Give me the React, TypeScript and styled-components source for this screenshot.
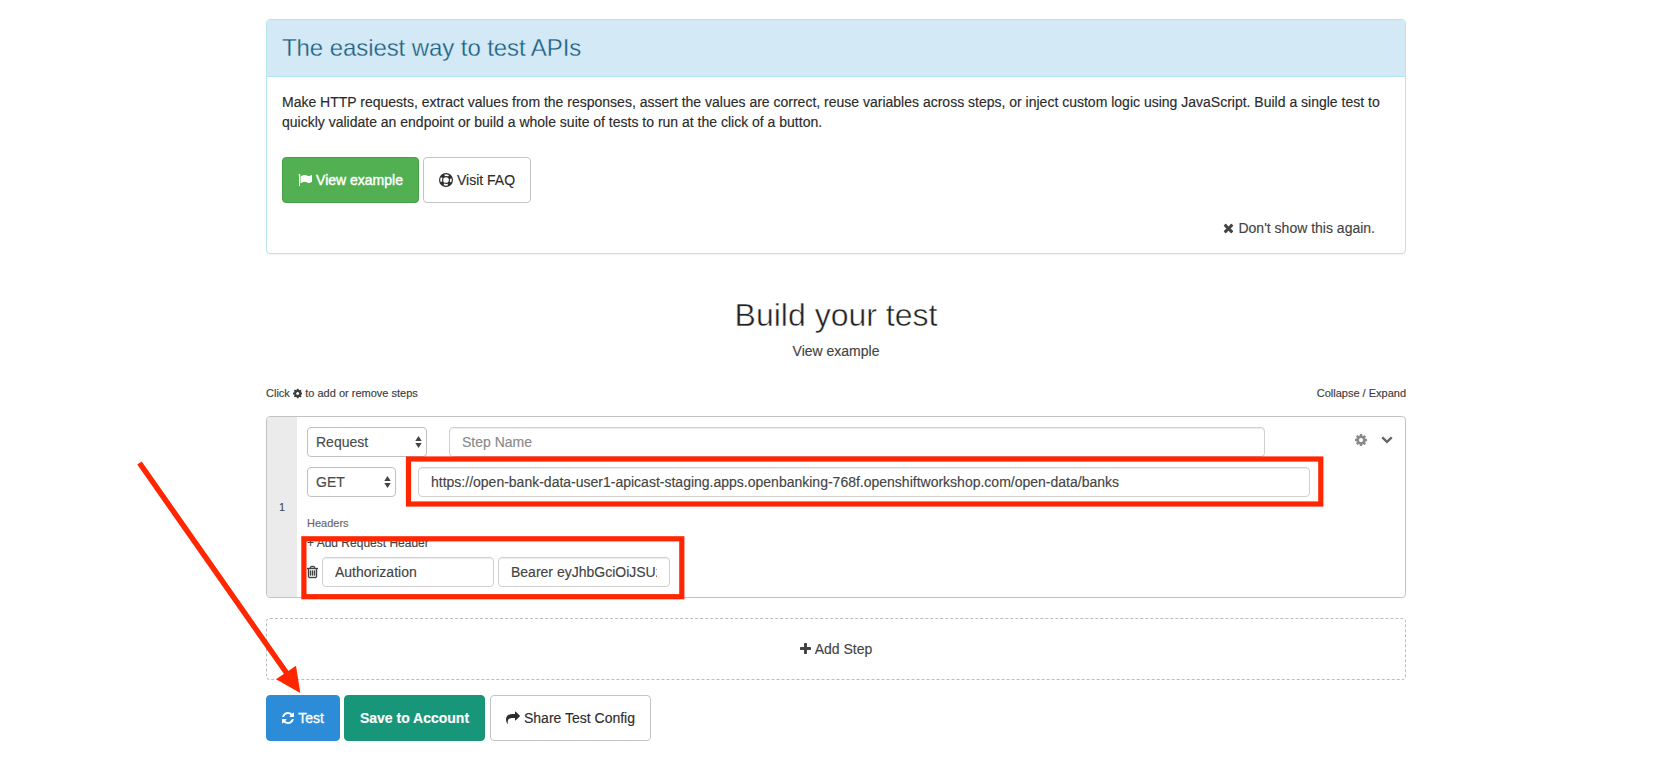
import React from "react";
import styled, { createGlobalStyle, css } from "styled-components";

const Global = createGlobalStyle`
  *, *::before, *::after { box-sizing: border-box; }
  body { margin: 0; background: #fff; -webkit-text-stroke: 0.15px currentColor; }
  body, input, button, select { font-family: "Liberation Sans", Arial, sans-serif; }
`;

const ICONS = {
  flag: "M320 256q0 72-64 110v1266q0 13-9.5 22.5t-22.5 9.5h-64q-13 0-22.5-9.5t-9.5-22.5v-1266q-64-38-64-110 0-53 37.5-90.5t90.5-37.5 90.5 37.5 37.5 90.5zm1472 64v763q0 25-12.5 38.5t-39.5 27.5q-215 116-369 116-61 0-123.5-22t-108.5-48-115.5-48-142.5-22q-192 0-464 146-17 9-33 9-26 0-45-19t-19-45v-742q0-32 31-55 21-14 79-43 236-120 421-120 107 0 200 29t219 88q38 19 88 19 54 0 117.5-21t110-47 88-47 54.5-21q26 0 45 19t19 45z",
  times: "M1490 1322q0 40-28 68l-136 136q-28 28-68 28t-68-28l-294-294-294 294q-28 28-68 28t-68-28l-136-136q-28-28-28-68t28-68l294-294-294-294q-28-28-28-68t28-68l136-136q28-28 68-28t68 28l294 294 294-294q28-28 68-28t68 28l136 136q28 28 28 68t-28 68l-294 294 294 294q28 28 28 68z",
  cog: "M1152 896q0-106-75-181t-181-75-181 75-75 181 75 181 181 75 181-75 75-181zm512-109v222q0 12-8 23t-20 13l-185 28q-19 54-39 91 35 50 107 138 10 12 10 25t-9 23q-27 37-99 108t-94 71q-12 0-26-9l-138-108q-44 23-91 38-16 136-29 186-7 28-36 28h-222q-14 0-24.5-8.5t-11.5-21.5l-28-184q-49-16-90-37l-141 107q-10 9-25 9-14 0-25-11-126-114-165-168-7-10-7-23 0-12 8-23 15-21 51-66.5t54-70.5q-27-50-41-99l-183-27q-13-2-21-12.5t-8-23.5v-222q0-12 8-23t19-13l186-28q14-46 39-92-40-57-107-138-10-12-10-24 0-10 9-23 26-36 98.5-107.5t94.5-71.5q13 0 26 10l138 107q44-23 91-38 16-136 29-186 7-28 36-28h222q14 0 24.5 8.5t11.5 21.5l28 184q49 16 90 37l142-107q9-9 24-9 13 0 25 10 129 119 165 170 7 8 7 22 0 12-8 23-15 21-51 66.5t-54 70.5q26 50 41 98l183 28q13 2 21 12.5t8 23.5z",
  chevron: "M1683 808l-742 741q-19 19-45 19t-45-19l-742-741q-19-19-19-45.5t19-45.5l166-165q19-19 45-19t45 19l531 531 531-531q19-19 45-19t45 19l166 165q19 19 19 45.5t-19 45.5z",
  trash: "M704 736v576q0 14-9 23t-23 9h-64q-14 0-23-9t-9-23v-576q0-14 9-23t23-9h64q14 0 23 9t9 23zm256 0v576q0 14-9 23t-23 9h-64q-14 0-23-9t-9-23v-576q0-14 9-23t23-9h64q14 0 23 9t9 23zm256 0v576q0 14-9 23t-23 9h-64q-14 0-23-9t-9-23v-576q0-14 9-23t23-9h64q14 0 23 9t9 23zm128 724v-948h-896v948q0 22 7 40.5t14.5 27 10.5 8.5h832q3 0 10.5-8.5t14.5-27 7-40.5zm-672-1076h448l-48-117q-7-9-17-11h-317q-10 2-17 11zm928 32v64q0 14-9 23t-23 9h-96v948q0 83-47 143.5t-113 60.5h-832q-66 0-113-58.5t-47-141.5v-952h-96q-14 0-23-9t-9-23v-64q0-14 9-23t23-9h309l70-167q15-37 54-63t79-26h320q40 0 79 26t54 63l70 167h309q14 0 23 9t9 23z",
  plus: "M1600 736v192q0 40-28 68t-68 28h-416v416q0 40-28 68t-68 28h-192q-40 0-68-28t-28-68v-416h-416q-40 0-68-28t-28-68v-192q0-40 28-68t68-28h416v-416q0-40 28-68t68-28h192q40 0 68 28t28 68v416h416q40 0 68 28t28 68z",
  refresh: "M1639 1056q0 5-1 7-64 268-268 434.5t-478 166.5q-146 0-282.5-55t-243.5-157l-129 129q-19 19-45 19t-45-19-19-45v-448q0-26 19-45t45-19h448q26 0 45 19t19 45-19 45l-137 137q71 66 161 102t187 36q134 0 250-65t186-179q11-17 53-117 8-23 30-23h192q13 0 22.5 9.5t9.5 22.5zm25-800v448q0 26-19 45t-45 19h-448q-26 0-45-19t-19-45 19-45l138-138q-148-137-349-137-134 0-250 65t-186 179q-11 17-53 117-8 23-30 23h-199q-13 0-22.5-9.5t-9.5-22.5v-7q65-268 270-434.5t480-166.5q146 0 284 55.5t245 156.5l130-129q19-19 45-19t45 19 19 45z",
  share: "M1792 640q0 26-19 45l-512 512q-19 19-45 19t-45-19-19-45v-256h-224q-98 0-175.5 6t-154 21.5-133 42.5-105.5 69.5-80 101-48.5 138.5-17.5 181q0 55 5 123 0 6 2.5 23.5t2.5 26.5q0 15-8.5 25t-23.5 10q-16 0-28-17-7-9-13-22t-13.5-30-10.5-24q-127-285-127-451 0-199 53-333 162-403 875-403h224v-256q0-26 19-45t45-19 45 19l512 512q19 19 19 45z",
};

type IconProps = { name: keyof typeof ICONS; size?: number; x?: number; w?: number; weight?: number };

/* Each glyph is trimmed to its advance: `x` is the left edge and `w` the width in 1792-unit em space. */
function Icon({ name, size = 14, x = 0, w = 1792, weight = 0 }: IconProps) {
  return (
    <svg
      width={(size * w) / 1792}
      height={size}
      viewBox={`${x} 0 ${w} 1792`}
      fill="currentColor"
      stroke={weight ? "currentColor" : "none"}
      strokeWidth={weight}
      aria-hidden
    >
      <path d={ICONS[name]} />
    </svg>
  );
}

function LifeRing() {
  return (
    <svg width="14" height="14" viewBox="0 0 14 14" fill="none" stroke="currentColor" aria-hidden>
      <circle cx="7" cy="7" r="6.4" strokeWidth="1.2" />
      <circle cx="7" cy="7" r="3.4" strokeWidth="1.1" />
      <circle cx="7" cy="7" r="5" strokeWidth="3" strokeDasharray="3.6 4.254" strokeDashoffset="-2.127" />
    </svg>
  );
}

const Page = styled.main`
  position: relative;
  width: 1673px;
  height: 777px;
  padding: 19px 267px 0 266px;
  overflow: hidden;
`;

const Panel = styled.section`
  height: 235px;
  border: 1px solid #b5e5ee;
  border-radius: 4px;
  box-shadow: 0 1px 1px rgba(0, 0, 0, 0.05);
`;

const PanelHeader = styled.header`
  height: 57px;
  padding: 0 15px;
  background: #d3e9f5;
  border-bottom: 1px solid #b5e5ee;
  border-radius: 3px 3px 0 0;
`;

const PanelTitle = styled.h3`
  margin: 0;
  font-size: 24px;
  font-weight: 400;
  line-height: 56px;
  letter-spacing: -0.08px;
  color: #225f81;
  -webkit-text-stroke: 0.3px #d3e9f5;
`;

const PanelBody = styled.div`
  padding: 15px;
`;

const Intro = styled.p`
  margin: 0 0 25px;
  font-size: 14px;
  line-height: 20px;
  color: #2b2b2b;
  white-space: nowrap;
`;

const ButtonRow = styled.div`
  display: flex;
  gap: 4px;
`;

const variants = {
  success: css`background: #52af52; border-color: #43a047; color: #fff; -webkit-text-stroke: 0.4px #fff;`,
  plain: css`background: #fff; border-color: #c4c4c4; color: #2d2d2d;`,
  primary: css`background: #2d8cd8; border-color: #2d8cd8; color: #fff; -webkit-text-stroke: 0.3px #fff;`,
  teal: css`background: #18967a; border-color: #18967a; color: #fff; font-weight: 700;`,
};

const Button = styled.button<{ $variant: keyof typeof variants; $width: number; $offset?: number }>`
  display: inline-flex;
  align-items: center;
  justify-content: center;
  gap: 4px;
  width: ${(p) => p.$width}px;
  height: 46px;
  margin-left: ${(p) => p.$offset ?? 0}px;
  padding: 0;
  border: 1px solid;
  border-radius: 4px;
  font-size: 14px;
  white-space: nowrap;
  ${(p) => variants[p.$variant]}
`;

const DismissRow = styled.div`
  display: flex;
  justify-content: flex-end;
  align-items: center;
  gap: 4px;
  margin: 15px 15px 0 0;
  font-size: 14px;
  line-height: 20px;
  color: #444;
`;

const Heading = styled.h1`
  margin: 39px 0 0;
  text-align: center;
  font-size: 32px;
  font-weight: 400;
  line-height: 44px;
  color: #222;
  -webkit-text-stroke: 0.5px #fff;
`;

const SubLink = styled.p`
  margin: 4px 0 0;
  text-align: center;
  font-size: 14px;
  line-height: 20px;
  color: #444;
`;

const HintBar = styled.div`
  display: flex;
  justify-content: space-between;
  margin-top: 24px;
  font-size: 11px;
  line-height: 16px;
  color: #3c3c3c;
`;

const Hint = styled.span`
  display: inline-flex;
  align-items: center;
  gap: 3px;
`;

const Step = styled.section`
  display: flex;
  height: 182px;
  margin-top: 15px;
  border: 1px solid #c2c2c2;
  border-radius: 4px;
`;

const StepNumber = styled.div`
  display: flex;
  align-items: center;
  justify-content: center;
  width: 30px;
  border-radius: 3px 0 0 3px;
  background: #ebebeb;
  font-size: 10px;
  color: #444;
`;

const StepBody = styled.div`
  flex: 1;
  padding: 10px 0 0 10px;
`;

const StepTools = styled.div`
  display: flex;
  gap: 14px;
  height: 40px;
  padding: 16px 12px 0 0;
  color: #8a8a8a;
  & > svg:last-child { color: #666; }
`;

const FieldRow = styled.div`
  display: flex;
  align-items: center;
  gap: 22px;
  height: 30px;
  & + & { margin-top: 10px; }
`;

const Select = styled.div<{ $width: number }>`
  display: flex;
  align-items: center;
  justify-content: space-between;
  width: ${(p) => p.$width}px;
  height: 30px;
  padding: 0 4px 0 8px;
  border: 1px solid #c0c0c0;
  border-radius: 4px;
  font-size: 14px;
  color: #4a4a4a;
`;

const Field = styled.input<{ $width: number }>`
  width: ${(p) => p.$width}px;
  height: 30px;
  padding: 0 12px;
  border: 1px solid #d0d0d0;
  border-radius: 4px;
  box-shadow: inset 0 1px 1px rgba(0, 0, 0, 0.075);
  background: #fff;
  font-size: 14px;
  color: #444;
  &::placeholder { color: #8a8a8a; opacity: 1; }
`;

const HeadersLabel = styled.div`
  margin-top: 18px;
  font-size: 11px;
  line-height: 16px;
  color: #666;
`;

const AddHeader = styled.div`
  margin: 4px 0 6px;
  font-size: 12px;
  line-height: 16px;
  color: #444;
`;

const HeaderRow = styled.div`
  display: flex;
  align-items: center;
  gap: 4px;
  color: #444;
`;

const AddStep = styled.div`
  display: flex;
  align-items: center;
  justify-content: center;
  gap: 4px;
  height: 62px;
  margin: 20px 0 15px;
  border: 1px dashed #bdbdbd;
  border-radius: 4px;
  font-size: 14px;
  color: #444;
`;

const Annotations = styled.svg`
  position: absolute;
  inset: 0;
  pointer-events: none;
`;

const SelectArrows = () => (
  <svg width="7" height="12" viewBox="0 0 7 12" fill="#444" aria-hidden>
    <path d="M0.3 5 L3.5 0 L6.7 5Z M0.3 7 L3.5 12 L6.7 7Z" />
  </svg>
);

export default function App() {
  return (
    <>
      <Global />
      <Page>
        <Panel>
          <PanelHeader><PanelTitle>The easiest way to test APIs</PanelTitle></PanelHeader>
          <PanelBody>
            <Intro>
              Make HTTP requests, extract values from the responses, assert the values are correct, reuse variables across steps, or inject custom logic using JavaScript. Build a single test to
              <br />
              quickly validate an endpoint or build a whole suite of tests to run at the click of a button.
            </Intro>
            <ButtonRow>
              <Button $variant="success" $width={137}><Icon name="flag" />View example</Button>
              <Button $variant="plain" $width={108}><LifeRing />Visit FAQ</Button>
            </ButtonRow>
            <DismissRow><Icon name="times" x={193} w={1408} />Don't show this again.</DismissRow>
          </PanelBody>
        </Panel>

        <Heading>Build your test</Heading>
        <SubLink>View example</SubLink>

        <HintBar>
          <Hint>Click <Icon name="cog" size={11} x={128} w={1536} /> to add or remove steps</Hint>
          <span>Collapse / Expand</span>
        </HintBar>

        <Step>
          <StepNumber>1</StepNumber>
          <StepBody>
            <FieldRow>
              <Select $width={120}>Request<SelectArrows /></Select>
              <Field $width={816} placeholder="Step Name" />
            </FieldRow>
            <FieldRow>
              <Select $width={89}>GET<SelectArrows /></Select>
              <Field $width={892} defaultValue="https://open-bank-data-user1-apicast-staging.apps.openbanking-768f.openshiftworkshop.com/open-data/banks" />
            </FieldRow>
            <HeadersLabel>Headers</HeadersLabel>
            <AddHeader>+ Add Request Header</AddHeader>
            <HeaderRow>
              <Icon name="trash" x={192} w={1408} weight={50} />
              <Field $width={172} defaultValue="Authorization" />
              <Field $width={172} defaultValue="Bearer eyJhbGciOiJSUzI1NiIs" />
            </HeaderRow>
          </StepBody>
          <StepTools>
            <Icon name="cog" x={128} w={1536} />
            <Icon name="chevron" size={12} />
          </StepTools>
        </Step>

        <AddStep><Icon name="plus" x={192} w={1408} />Add Step</AddStep>

        <ButtonRow>
          <Button $variant="primary" $width={74}><Icon name="refresh" x={128} w={1536} />Test</Button>
          <Button $variant="teal" $width={141}>Save to Account</Button>
          <Button $variant="plain" $width={161} $offset={1}><Icon name="share" />Share Test Config</Button>
        </ButtonRow>

        <Annotations width="1673" height="777" viewBox="0 0 1673 777" fill="none" stroke="#ff2600" strokeWidth="5.2">
          <rect x="408.5" y="459" width="912.3" height="45" />
          <rect x="303.9" y="538.8" width="377.9" height="57.9" />
          <path d="M139.5 463 L288 675" strokeWidth="5.5" />
          <path d="M296 665.7 L300.3 693 L276 679.3Z" fill="#ff2600" stroke="none" />
        </Annotations>
      </Page>
    </>
  );
}
